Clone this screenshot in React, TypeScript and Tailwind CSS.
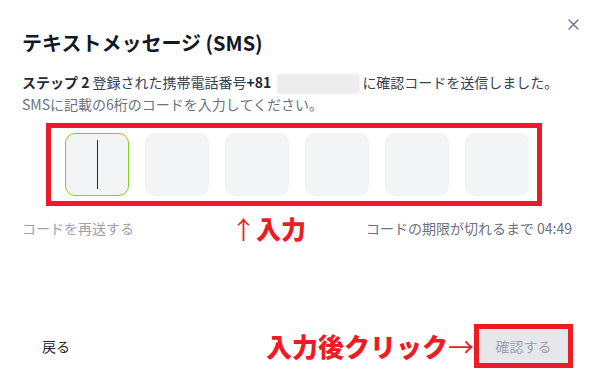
import React from "react";

const jp = { fontFamily: '"Noto Sans CJK JP", "Noto Sans", sans-serif' };

export default function App() {
  return (
    <div
      className="relative flex h-[391px] w-[596px] flex-col overflow-hidden bg-white text-[#1f2937]"
      style={jp}
    >
      {/* header */}
      <div className="flex items-start justify-between pl-[22px] pr-[17px] pt-[29px]">
        <h1 className="text-[20px] font-bold leading-[28px] text-[#111827]">
          テキストメッセージ (SMS)
        </h1>
        <button className="-mt-[11px] flex h-[12px] w-[12px] items-center justify-center text-[#6b7280]">
          <svg width="11" height="11" viewBox="0 0 11 11" fill="none">
            <path d="M1 1L10 10M10 1L1 10" stroke="currentColor" strokeWidth="1.4" strokeLinecap="round" />
          </svg>
        </button>
      </div>

      {/* description */}
      <div className="mt-[15px] px-[22px] text-[14px] leading-[20px]">
        <p className="whitespace-nowrap text-[#374151]">
          <span className="font-bold text-[#1f2937]">ステップ 2</span> 登録された携帯電話番号
          <span className="font-semibold text-[#1f2937]">+81</span>
          <span className="ml-[6px] mr-[2px] inline-block h-[20px] w-[83px] rounded-[2px] bg-[#ededed] align-middle blur-[1px]" />
          <span>に確認コードを送信しました。</span>
        </p>
        <p className="text-[#6b7280]">SMSに記載の6桁のコードを入力してください。</p>
      </div>

      {/* code inputs */}
      <div className="relative mt-[19px] flex gap-[16px] pl-[65px]">
        <div className="relative h-[63px] w-[64px] rounded-[10px] border border-[#7ed321] bg-[#f3f4f6]">
          <div className="absolute left-[31px] top-[6px] h-[49px] w-[1px] bg-[#1f2937]" />
        </div>
        <div className="h-[63px] w-[64px] rounded-[10px] bg-[#f3f4f6]" />
        <div className="h-[63px] w-[64px] rounded-[10px] bg-[#f3f4f6]" />
        <div className="h-[63px] w-[64px] rounded-[10px] bg-[#f3f4f6]" />
        <div className="h-[63px] w-[64px] rounded-[10px] bg-[#f3f4f6]" />
        <div className="h-[63px] w-[64px] rounded-[10px] bg-[#f3f4f6]" />
        {/* annotation frame */}
        <div className="pointer-events-none absolute left-[46px] top-[-10px] h-[83px] w-[496px] border-[5px] border-[#ec1c24]" />
      </div>

      {/* resend / timer */}
      <div className="relative mt-[22px] flex items-center justify-between pl-[22px] pr-[24px] text-[14px] leading-[20px]">
        <span className="text-[#9ca3af]">コードを再送する</span>
        <span className="text-[#6b7280]">コードの期限が切れるまで 04:49</span>
        <span className="absolute left-[231px] top-[-4px] whitespace-nowrap text-[25px] font-black leading-[28px] text-[#ec1c24]">
          <span className="font-normal">↑</span>入力
        </span>
      </div>

      {/* footer */}
      <div className="relative mt-auto flex items-center justify-between pb-[28px] pl-[22px] pr-[28px]">
        <button className="px-[20px] text-[14px] leading-[34px] text-[#1f2937]">戻る</button>
        <div className="relative">
          <button className="h-[34px] w-[89px] bg-[#e5e7eb] text-[14px] text-[#9ca3af]">確認する</button>
          <div className="pointer-events-none absolute -inset-[5px] border-[5px] border-[#ec1c24]" />
          <span className="absolute right-[94px] top-[2px] whitespace-nowrap text-[26px] font-black leading-[30px] text-[#ec1c24]">
            入力後クリック<span className="font-normal">→</span>
          </span>
        </div>
      </div>
    </div>
  );
}
